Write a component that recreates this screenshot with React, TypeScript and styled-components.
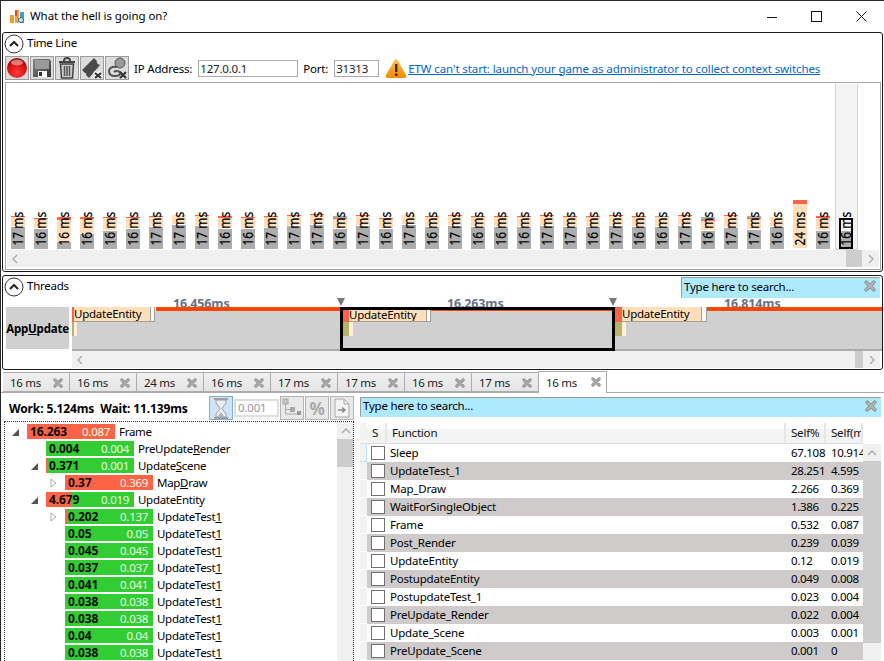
import React from 'react';
import styled, { createGlobalStyle } from 'styled-components';

const Global = createGlobalStyle`
  html, body { margin: 0; padding: 0; background: #fff; }
  * { box-sizing: border-box; }
  body { font-family: "Noto Sans", "Open Sans", sans-serif; font-size: 11.5px; letter-spacing: -0.2px; color: #000; }
`;

const Window = styled.div`
  width: 884px; height: 661px; overflow: hidden; background: #fff;
  border-top: 1px solid #2a2a2a; border-left: 1px solid #2a2a2a;
  display: flex; flex-direction: column;
`;
const TitleBar = styled.div`
  height: 31px; flex: none; display: flex; align-items: center; padding-left: 9px;
`;
const TitleText = styled.span`margin-left: 5px; margin-bottom: 2px; font-size: 11.5px; letter-spacing: -0.08px; flex: 1;`;
const WinBtn = styled.div`width: 45px; height: 31px; display: flex; align-items: center; justify-content: center;`;
const Panel = styled.section<{ $h: number }>`
  height: ${p => p.$h}px; flex: none; width: 881px; margin-left: 1px;
  border: 1px solid #1a1a1a; border-radius: 3px; display: flex; flex-direction: column; position: relative;
`;
const PanelGap = styled.div`height: 3px; flex: none;`;
const PanelHead = styled.div`height: 22px; flex: none; display: flex; align-items: flex-start; gap: 3px; padding: 1px 0 0 1px;`;
const PanelTitle = styled.span`font-size: 11.5px; line-height: 18px; letter-spacing: -0.25px;`;
const Toolbar = styled.div`height: 24px; margin: 1px 0 2px 2px; flex: none; display: flex; align-items: center;`;
const ToolBtn = styled.button`
  width: 24px; height: 24px; margin-right: 1px; padding: 0; flex: none; background: #dcdcdc; border: 1px solid #9c9c9c;
  display: flex; align-items: center; justify-content: center;
`;
const FieldLabel = styled.span<{ $ml: number }>`margin-left: ${p => p.$ml}px; font-size: 11.5px;`;
const Field = styled.div<{ $w: number; $ml: number }>`
  width: ${p => p.$w}px; margin-left: ${p => p.$ml}px; height: 17px; border: 1px solid #ababab; padding-left: 1px;
  font-size: 11.5px; line-height: 15px; color: #222;
`;
const WarnWrap = styled.span`margin-left: 6px; display: flex;`;
const WarnLink = styled.a`margin-left: 1px; color: #0066cc; text-decoration: underline; font-size: 11.5px; letter-spacing: -0.1px; white-space: nowrap;`;
const FrameBox = styled.div`
  height: 188px; margin: 0 1px 0 2px; border: 1px solid #a6a6a6; display: flex; flex-direction: column; flex: none;
`;
const Chart = styled.div`height: 167px; flex: none; display: flex; padding: 1px 0 0 1px;`;
const Cell = styled.div<{ $sel?: boolean }>`
  width: 23px; flex: none; display: flex; align-items: flex-end; padding: 0 5px 1px 4px; position: relative;
  ${p => p.$sel ? 'background:#f3f3f3; box-shadow: inset 1px 0 #d4d4d4, inset -1px 0 #d4d4d4, inset 0 -1px #d4d4d4;' : ''}
`;
const FrameBar = styled.div`width: 14px; position: relative; display: flex; flex-direction: column;`;
const Seg = styled.div<{ $c: string; $grow?: boolean }>`background: ${p => p.$c}; flex: ${p => p.$grow ? '1 1 0' : 'none'};`;
const FrameLabel = styled.span`
  position: absolute; left: -1px; bottom: 4px; width: 16px; display: block; transform-origin: 50% 100%; transform: scaleY(0.85);
`;
const FrameLabelText = styled.span`
  display: block; writing-mode: vertical-rl; transform: rotate(180deg);
  font-size: 14px; line-height: 16px; letter-spacing: 0; white-space: nowrap; color: #000; -webkit-text-stroke: 0.2px #000;
`;
const SelBox = styled.div`position: absolute; left: 0; right: 0; top: 0; bottom: 0; border: 2px solid #000;`;
const HScroll = styled.div<{ $ml?: number; $mr?: number }>`
  height: 17px; flex: none; background: #f0f0f0; display: flex; align-items: center;
  margin: 0 ${p => p.$mr ?? 1}px 0 ${p => p.$ml ?? 1}px;
`;
const ArrowBox = styled.div`width: 17px; height: 17px; flex: none; display: flex; align-items: center; justify-content: center;`;
const Spacer = styled.div`flex: 1;`;
const HThumb = styled.div<{ $w: number }>`width: ${p => p.$w}px; height: 17px; background: #cdcdcd; flex: none;`;
const BlueSearch = styled.div<{ $w: number; $h: number }>`
  width: ${p => p.$w}px; height: ${p => p.$h}px; flex: none; background: #aeeaff; border: 1px solid #aeeaff;
  border-left-color: #9a9a9a; border-top-color: #9a9a9a; display: flex; align-items: center; padding: 0 3px 3px 2px;
  font-size: 11.5px; letter-spacing: -0.23px; justify-content: space-between; position: relative;
`;
const ThreadHead = styled(PanelHead)`padding-right: 2px; justify-content: flex-start;`;
const ThreadRow = styled.div`height: 53px; flex: none; display: flex;`;
const ThreadLabel = styled.div`
  width: 63px; margin: 9px 3px 2px 3px; background: #d0d0d0; font-weight: 700; font-size: 11.5px; letter-spacing: -0.2px;
  display: flex; align-items: center; justify-content: center; white-space: nowrap;
`;
const Track = styled.div`flex: 1; position: relative; overflow: hidden;`;
const TrackBody = styled.div`position: absolute; left: 0; right: 0; top: 13px; height: 40px; background: #d0d0d0; border-bottom: 2px solid #ababab;`;
const Ruler = styled.span<{ $x: number }>`
  position: absolute; left: ${p => p.$x}px; top: -3px; font-size: 12.5px; font-weight: 700; line-height: 18px; color: #667283; height: 12px; overflow: hidden; letter-spacing: -0.15px;
`;
const Orange = styled.div<{ $x: number; $w: number }>`position: absolute; left: ${p => p.$x}px; width: ${p => p.$w}px; top: 9px; height: 4px; background: #ff4500;`;
const Block = styled.div<{ $x: number; $w: number; $y: number; $h: number; $c: string; $line?: boolean }>`
  position: absolute; left: ${p => p.$x}px; width: ${p => p.$w}px; top: ${p => p.$y}px; height: ${p => p.$h}px; background: ${p => p.$c};
  ${p => p.$line ? 'border: 1px solid #a89f94; border-left: 0; border-top: 0;' : ''}
  font-size: 11.5px; letter-spacing: -0.25px; line-height: 14px; padding-left: 0; white-space: nowrap; overflow: hidden;
`;
const Marker = styled.div<{ $x: number }>`
  position: absolute; left: ${p => p.$x}px; top: 0; width: 0; height: 0; border-left: 4px solid transparent; border-right: 4px solid transparent; border-top: 8px solid #777;
`;
const Selection = styled.div`position: absolute; left: 268px; top: 9px; width: 275px; height: 44px; border: 3px solid #000;`;
const TabStrip = styled.div`
  height: 23px; flex: none; display: flex; align-items: flex-end; padding-left: 3px; border-bottom: 1px solid #acacac; margin-left: -1px;
`;
const Tab = styled.div<{ $active?: boolean }>`
  width: ${p => p.$active ? 69 : 67}px; height: ${p => p.$active ? 22 : 20}px; flex: none; display: flex; align-items: center;
  font-size: 11.5px; letter-spacing: -0.3px; padding-left: 7px; position: relative; color: #222;
  margin-bottom: ${p => p.$active ? -1 : 0}px; margin-left: ${p => p.$active ? -1 : 0}px;
  background: ${p => p.$active ? '#fff' : 'linear-gradient(#f0f0f0, #e5e5e5)'};
  border: 1px solid #acacac; border-left-width: ${p => p.$active ? 1 : 0}px; border-bottom: ${p => p.$active ? '0' : '1px solid #acacac'};
`;
const TabX = styled.span<{ $r: number }>`position: absolute; right: ${p => p.$r}px; top: 5px; display: flex;`;
const Content = styled.div`flex: 1; display: flex; min-height: 0;`;
const Left = styled.div`width: 359px; flex: none; display: flex; flex-direction: column;`;
const StatsRow = styled.div`height: 28px; flex: none; display: flex; align-items: center; padding-top: 2px; position: relative;`;
const Stats = styled.div`font-weight: 700; font-size: 12px; margin-left: 8px; width: 200px; white-space: pre; letter-spacing: -0.12px;`;
const StatBtn = styled.div<{ $on?: boolean }>`
  width: 24px; height: 24px; flex: none; margin-right: 1px; display: flex; align-items: center; justify-content: center;
  background: ${p => p.$on ? '#cfe5f5' : '#e9e9e9'}; border: 1px solid ${p => p.$on ? '#7dafd0' : '#b4b4b4'}; color: #a8a8a8; font-size: 17px; font-weight: 700;
`;
const StatInput = styled.div`
  width: 45px; height: 18px; margin-right: 1px; flex: none; border: 2px solid #dedede; color: #999; font-size: 11.5px; line-height: 14px; padding-left: 2px;
`;
const TreeBox = styled.div`
  flex: 1; width: 350px; margin-left: 3px; border: 1px dotted #333; border-bottom: 0; display: flex; min-height: 0;
`;
const TreeRows = styled.div`flex: 1; padding-top: 2px; overflow: hidden;`;
const TreeRow = styled.div<{ $lvl: number }>`
  height: 17px; display: flex; align-items: flex-start; padding-left: ${p => 5 + p.$lvl * 19}px;
`;
const Twist = styled.div`width: 17px; height: 15px; flex: none; display: flex; align-items: center; justify-content: flex-start; padding-left: 1px;`;
const Bar = styled.div<{ $red: number }>`
  width: 88px; height: 15px; flex: none; display: flex; align-items: center; justify-content: space-between; padding: 0 5px 0 3px;
  background: linear-gradient(to right, #ff6347 ${p => p.$red}px, #32cd32 ${p => p.$red}px);
`;
const Total = styled.span`font-weight: 700; font-size: 12px; letter-spacing: -0.1px; color: #0a0a0a;`;
const SelfV = styled.span`font-size: 11.5px; letter-spacing: -0.3px; color: #e8ffe8;`;
const RowName = styled.span`margin-left: 4px; font-size: 11.5px; letter-spacing: -0.3px; line-height: 15px; white-space: nowrap;`;
const U = styled.span`text-decoration: underline;`;
const VScroll = styled.div`width: 16px; flex: none; background: #f0f0f0; display: flex; flex-direction: column;`;
const VThumb = styled.div<{ $h: number }>`height: ${p => p.$h}px; background: #cdcdcd; flex: none;`;
const Right = styled.div`width: 521px; flex: none; display: flex; flex-direction: column; padding-top: 4px;`;
const Table = styled.div`margin-top: 6px; flex: 1; display: flex; flex-direction: column; min-height: 0;`;
const HeadRow = styled.div`
  height: 21px; flex: none; width: 503px; display: flex; align-items: center; font-size: 11.5px; color: #111; padding-bottom: 1px;
  background: linear-gradient(#fff 30%, #f3f3f3 30%); border-bottom: 1px solid #ddd;
`;
const HeadCell = styled.div<{ $w: number }>`
  width: ${p => p.$w}px; height: 100%; flex: none; display: flex; align-items: center; padding-left: 5px; overflow: hidden; white-space: nowrap;
  border-right: 2px solid #e6e6e6;
`;
const Stub = styled.div<{ $on?: boolean }>`
  width: 7px; height: 100%; flex: none; background: #f2f2f2; border-bottom: 1px solid ${p => p.$on ? '#bfe0f5' : '#fff'};
  ${p => p.$on ? 'border-right: 1px solid #bfe0f5;' : ''}
`;
const BodyWrap = styled.div`flex: 1; display: flex; min-height: 0;`;
const Rows = styled.div`width: 503px; flex: none; display: flex; flex-direction: column;`;
const DataRow = styled.div`height: 18px; flex: none; display: flex; align-items: center; font-size: 11.5px;`;
const RowBody = styled.div<{ $g: boolean }>`flex: 1; height: 100%; display: flex; align-items: center; padding-bottom: 1px; background: ${p => p.$g ? '#cfcbcb' : '#fff'};`;
const Check = styled.div`width: 14px; height: 14px; flex: none; margin: 1px 5px 0 4px; background: #fff; border: 1px solid #707070;`;
const Fn = styled.div`width: 401px; flex: none;`;
const Num = styled.div`width: 40px; flex: none; letter-spacing: -0.3px;`;
const ScrollCol = styled(VScroll)`width: 18px; margin-top: 0;`;

const Chev = ({ dir, c = '#a8a8a8' }: { dir: 'l' | 'r' | 'u' | 'd'; c?: string }) => {
  const d = { l: 'M6 1 L2 5 L6 9', r: 'M3 1 L7 5 L3 9', u: 'M1 7 L5 3 L9 7', d: 'M1 3 L5 7 L9 3' }[dir];
  return <svg width="10" height="10"><path d={d} fill="none" stroke={c} strokeWidth="1.3" /></svg>;
};
const Collapse = () => (
  <svg width="20" height="20" viewBox="0 0 20 20">
    <circle cx="10" cy="10" r="9" fill="#fff" stroke="#333" strokeWidth="1" />
    <path d="M6 12 L10 8 L14 12" fill="none" stroke="#222" strokeWidth="2" />
  </svg>
);
const CrossIcon = ({ s = 12, c = '#b4b4b4' }: { s?: number; c?: string }) => (
  <svg width={s} height={s} viewBox="0 0 12 12">
    <path d="M2.2 2.2 L9.8 9.8 M9.8 2.2 L2.2 9.8" stroke="#8a8a8a" strokeWidth="3.6" strokeLinecap="round" />
    <path d="M2.2 2.2 L9.8 9.8 M9.8 2.2 L2.2 9.8" stroke={c} strokeWidth="2" strokeLinecap="round" />
  </svg>
);
const Logo = () => (
  <svg width="15" height="15" viewBox="0 0 15 15">
    <rect x="0" y="6" width="4" height="8" fill="#f39c25" />
    <rect x="5" y="1" width="4" height="13" fill="#e8a33a" />
    <rect x="5" y="1" width="2" height="6" fill="#d8473c" />
    <rect x="10" y="3" width="4" height="11" fill="#3d9bd8" />
    <circle cx="11" cy="11" r="2.5" fill="#bfe3f5" stroke="#2d6f9e" />
  </svg>
);
const RecordIcon = () => (
  <svg width="22" height="22" viewBox="0 0 22 22">
    <defs><radialGradient id="rg" cx="50%" cy="75%" r="70%"><stop offset="0" stopColor="#ff3b3b" /><stop offset="0.7" stopColor="#d80f0f" /><stop offset="1" stopColor="#8e0606" /></radialGradient></defs>
    <circle cx="11" cy="11" r="10" fill="url(#rg)" />
    <ellipse cx="11" cy="5.5" rx="6" ry="3" fill="#fff" opacity="0.45" />
  </svg>
);
const SaveIcon = () => (
  <svg width="20" height="20" viewBox="0 0 20 20">
    <defs><linearGradient id="sg" x1="0" y1="0" x2="1" y2="1"><stop offset="0" stopColor="#8a8a8a" /><stop offset="1" stopColor="#333" /></linearGradient></defs>
    <path d="M1 1 H17 L19 3 V19 H1 Z" fill="url(#sg)" />
    <rect x="3" y="2" width="14" height="9" fill="#9a9a9a" />
    <rect x="6" y="13" width="9" height="6" fill="#fff" />
    <rect x="7" y="14" width="3" height="4" fill="#333" />
  </svg>
);
const TrashIcon = () => (
  <svg width="20" height="22" viewBox="0 0 20 22">
    <path d="M2 5 H18 M7 4 Q7 1 10 1 Q13 1 13 4" fill="none" stroke="#444" strokeWidth="2" />
    <path d="M3.5 7 H16.5 L15.5 21 H4.5 Z" fill="#ccc" stroke="#444" strokeWidth="1.5" />
    <path d="M7.5 9 V19 M10 9 V19 M12.5 9 V19" stroke="#555" strokeWidth="1.5" />
  </svg>
);
const TicketIcon = () => (
  <svg width="22" height="22" viewBox="0 0 22 22">
    <path d="M1 13 L13 1 L16 4 Q15 6 17 7 L19 8 L8 21 L5 18 Q6 16 4 16 Z" fill="#4a4a4a" />
    <path d="M13 15 L20 21 M20 15 L13 21" stroke="#fff" strokeWidth="4" />
    <path d="M14 16 L20 21 M20 16 L14 21" stroke="#333" strokeWidth="2.2" />
  </svg>
);
const HookIcon = () => (
  <svg width="22" height="22" viewBox="0 0 22 22">
    <circle cx="14" cy="6" r="5" fill="#9a9a9a" stroke="#555" />
    <path d="M11 10 Q4 9 3 14 Q3 19 9 19 Q15 19 14 15 Q10 13 8 15" fill="none" stroke="#555" strokeWidth="2" />
    <path d="M14 15 L20 21 M20 15 L14 21" stroke="#333" strokeWidth="2.2" />
  </svg>
);
const WarnIcon = () => (
  <svg width="22" height="21" viewBox="0 0 22 21">
    <defs><linearGradient id="wg" x1="0" y1="0" x2="0" y2="1"><stop offset="0" stopColor="#ffc04d" /><stop offset="1" stopColor="#f08a00" /></linearGradient></defs>
    <path d="M11 1 Q12 1 13 3 L21 17 Q22 20 19 20 H3 Q0 20 1 17 L9 3 Q10 1 11 1 Z" fill="url(#wg)" />
    <rect x="10" y="6" width="2.4" height="8" fill="#3a2a10" />
    <rect x="10" y="15.5" width="2.4" height="2.5" fill="#3a2a10" />
  </svg>
);
const Hourglass = () => (
  <svg width="16" height="21" viewBox="0 0 16 21">
    <path d="M1 1 H15 M1 20 H15" stroke="#9aa0a4" strokeWidth="2" />
    <path d="M3 2 V5 L7 10.5 L3 16 V19 H13 V16 L9 10.5 L13 5 V2 Z" fill="#e8eef2" stroke="#9aa0a4" />
    <path d="M4.5 19 L8 14 L11.5 19 Z" fill="#b0b4b8" />
  </svg>
);
const TreeIcon = () => (
  <svg width="20" height="20" viewBox="0 0 20 20">
    <rect x="1" y="1" width="5" height="5" fill="#c4c4c4" stroke="#aaa" />
    <rect x="8" y="9" width="5" height="5" fill="#aaa" />
    <rect x="15" y="13" width="4" height="4" fill="#999" />
    <path d="M3.5 6 V11.5 H8 M3.5 11 V16 H15" stroke="#aaa" fill="none" />
  </svg>
);
const FileIcon = () => (
  <svg width="16" height="20" viewBox="0 0 16 20">
    <path d="M1 1 H10 L15 6 V19 H1 Z" fill="#f4f4f4" stroke="#a8a8a8" />
    <path d="M10 1 V6 H15" fill="none" stroke="#a8a8a8" />
    <path d="M4 12 H10 M8 9.5 L11 12 L8 14.5" fill="none" stroke="#888" strokeWidth="1.5" />
  </svg>
);
const Twisty = ({ open }: { open?: boolean }) => (
  <svg width="9" height="10" viewBox="0 0 9 10">
    {open ? <path d="M8 2 V9 H1 Z" fill="#555" /> : <path d="M2 1 L7 5 L2 9 Z" fill="#fff" stroke="#aaa" />}
  </svg>
);

type F = [string, number, number, number, number];
const frames: F[] = [
  ['17', 216, 0, 1, 227], ['16', 218, 0, 1, 229], ['16', 217, 0, 3, 242], ['16', 217, 0, 2, 234], ['16', 217, 0, 1, 231],
  ['16', 217, 0, 1, 229], ['17', 216, 0, 1, 227], ['17', 215, 0, 0, 225], ['17', 215, 0, 1, 226], ['16', 216, 0, 2, 229],
  ['16', 217, 0, 1, 229], ['17', 216, 0, 1, 228], ['17', 215, 0, 1, 226], ['17', 214, 0, 1, 225], ['16', 216, 2, 1, 229],
  ['17', 215, 0, 1, 226], ['16', 218, 0, 1, 229], ['17', 215, 0, 0, 225], ['16', 216, 0, 1, 227], ['17', 215, 0, 1, 226],
  ['16', 216, 0, 1, 227], ['16', 216, 0, 1, 227], ['16', 216, 0, 1, 227], ['17', 215, 0, 1, 226], ['17', 216, 0, 1, 227],
  ['16', 216, 0, 1, 227], ['17', 215, 0, 1, 226], ['16', 216, 0, 1, 227], ['16', 216, 1, 0, 227], ['17', 215, 0, 1, 226],
  ['16', 217, 3, 1, 231], ['17', 215, 0, 1, 228], ['17', 216, 2, 1, 230], ['16', 217, 0, 0, 227], ['24', 200, 0, 4, 249],
  ['16', 216, 0, 2, 231],
];

const tabs = ['16 ms', '16 ms', '24 ms', '16 ms', '17 ms', '17 ms', '16 ms', '17 ms'];

type T = { lvl: number; tw?: 'o' | 'c'; total: string; self: string; red: number; name: React.ReactNode };
const T1 = <>UpdateTest<U>1</U></>;
const tree: T[] = [
  { lvl: 0, tw: 'o', total: '16.263', self: '0.087', red: 88, name: 'Frame' },
  { lvl: 1, total: '0.004', self: '0.004', red: 0, name: <>PreUpdate<U>R</U>ender</> },
  { lvl: 1, tw: 'o', total: '0.371', self: '0.001', red: 2, name: <>Update<U>S</U>cene</> },
  { lvl: 2, tw: 'c', total: '0.37', self: '0.369', red: 88, name: <>Map<U>D</U>raw</> },
  { lvl: 1, tw: 'o', total: '4.679', self: '0.019', red: 25, name: 'UpdateEntity' },
  { lvl: 2, tw: 'c', total: '0.202', self: '0.137', red: 3, name: T1 },
  ...['0.05', '0.045', '0.037', '0.041', '0.038', '0.038', '0.04', '0.038'].map(v => ({ lvl: 2, total: v, self: v, red: 1, name: T1 })),
];

const fnRows: [string, string, string][] = [
  ['Sleep', '67.108', '10.914'], ['UpdateTest_1', '28.251', '4.595'], ['Map_Draw', '2.266', '0.369'],
  ['WaitForSingleObject', '1.386', '0.225'], ['Frame', '0.532', '0.087'], ['Post_Render', '0.239', '0.039'],
  ['UpdateEntity', '0.12', '0.019'], ['PostupdateEntity', '0.049', '0.008'], ['PostupdateTest_1', '0.023', '0.004'],
  ['PreUpdate_Render', '0.022', '0.004'], ['Update_Scene', '0.003', '0.001'], ['PreUpdate_Scene', '0.001', '0'],
];

const FrameColumn = ({ f }: { f: F }) => {
  const [label, top, cap, red, gray] = f;
  const h = 249 - top;
  return (
    <Cell>
      <FrameBar style={{ height: h }}>
        {cap > 0 && <Seg $c="#adadad" style={{ height: cap }} />}
        {red > 0 && <Seg $c="#ff6347" style={{ height: red }} />}
        <Seg $c="#ffdfba" $grow />
        <Seg $c="#fff" style={{ height: 1 }} />
        <Seg $c="#adadad" style={{ height: 249 - gray }} />
        <FrameLabel><FrameLabelText>{label} ms</FrameLabelText></FrameLabel>
      </FrameBar>
    </Cell>
  );
};

export default function App() {
  return (
    <Window>
      <Global />
      <TitleBar>
        <Logo />
        <TitleText>What the hell is going on?</TitleText>
        <WinBtn><svg width="10" height="10"><path d="M0 5.5 H10" stroke="#111" /></svg></WinBtn>
        <WinBtn><svg width="11" height="11"><rect x="0.5" y="0.5" width="10" height="10" fill="none" stroke="#111" /></svg></WinBtn>
        <WinBtn><svg width="11" height="11"><path d="M0.5 0.5 L10.5 10.5 M10.5 0.5 L0.5 10.5" stroke="#111" /></svg></WinBtn>
      </TitleBar>

      <Panel $h={240}>
        <PanelHead><Collapse /><PanelTitle>Time Line</PanelTitle></PanelHead>
        <Toolbar>
          <ToolBtn><RecordIcon /></ToolBtn>
          <ToolBtn><SaveIcon /></ToolBtn>
          <ToolBtn><TrashIcon /></ToolBtn>
          <ToolBtn><TicketIcon /></ToolBtn>
          <ToolBtn><HookIcon /></ToolBtn>
          <FieldLabel $ml={4}>IP Address:</FieldLabel>
          <Field $w={100} $ml={6}>127.0.0.1</Field>
          <FieldLabel $ml={5}>Port:</FieldLabel>
          <Field $w={45} $ml={6}>31313</Field>
          <WarnWrap><WarnIcon /></WarnWrap>
          <WarnLink>ETW can't start: launch your game as administrator to collect context switches</WarnLink>
        </Toolbar>
        <FrameBox>
          <Chart>
            {frames.map((f, i) => <FrameColumn key={i} f={f} />)}
            <Cell $sel>
              <FrameBar style={{ height: 31 }}>
                <Seg $c="#f3f3f3" $grow />
                <Seg $c="#adadad" style={{ height: 18 }} />
                <SelBox />
                <FrameLabel><FrameLabelText>16 ms</FrameLabelText></FrameLabel>
              </FrameBar>
            </Cell>
          </Chart>
          <HScroll>
            <ArrowBox><Chev dir="l" /></ArrowBox>
            <Spacer />
            <HThumb $w={16} />
            <ArrowBox><Chev dir="r" /></ArrowBox>
          </HScroll>
        </FrameBox>
      </Panel>
      <PanelGap />
      <Panel $h={95}>
        <ThreadHead>
          <Collapse /><PanelTitle>Threads</PanelTitle>
          <Spacer />
          <BlueSearch $w={199} $h={21}>Type here to search...<CrossIcon /></BlueSearch>
        </ThreadHead>
        <ThreadRow>
          <ThreadLabel><span>App<U>U</U>pdate</span></ThreadLabel>
          <Track>
            <Ruler $x={101}>16.456ms</Ruler>
            <Ruler $x={375}>16.263ms</Ruler>
            <Ruler $x={652}>16.814ms</Ruler>
            <TrackBody />
            <Orange $x={84} $w={184} />
            <Orange $x={359} $w={184} />
            <Orange $x={635} $w={180} />
            <Block $x={0} $w={2} $y={9} $h={15} $c="#ff6347" />
            <Block $x={2} $w={77} $y={9} $h={15} $c="#ffdfba" $line>UpdateEntity</Block>
            <Block $x={79} $w={4} $y={9} $h={15} $c="#f2fbff" $line />
            <Block $x={0} $w={2} $y={24} $h={14} $c="#b5b56a" />
            <Block $x={2} $w={3} $y={24} $h={14} $c="#ffeeda" />
            <Block $x={271} $w={6} $y={10} $h={14} $c="#ff6347" />
            <Block $x={277} $w={78} $y={10} $h={14} $c="#ffdfba" $line>UpdateEntity</Block>
            <Block $x={355} $w={4} $y={10} $h={14} $c="#f2fbff" $line />
            <Block $x={271} $w={6} $y={24} $h={14} $c="#b5b56a" />
            <Block $x={277} $w={4} $y={24} $h={14} $c="#ffeeda" />
            <Block $x={543} $w={7} $y={9} $h={15} $c="#ff6347" />
            <Block $x={550} $w={80} $y={9} $h={15} $c="#ffdfba" $line>UpdateEntity</Block>
            <Block $x={630} $w={5} $y={9} $h={15} $c="#f2fbff" $line />
            <Block $x={543} $w={7} $y={24} $h={14} $c="#b5b56a" />
            <Block $x={550} $w={4} $y={24} $h={14} $c="#ffeeda" />
            <Marker $x={265} />
            <Marker $x={537} />
            <Selection />
          </Track>
        </ThreadRow>
        <HScroll $ml={69} $mr={2}>
          <ArrowBox><Chev dir="l" /></ArrowBox>
          <Spacer />
          <HThumb $w={8} />
          <ArrowBox><Chev dir="r" /></ArrowBox>
        </HScroll>
      </Panel>

      <TabStrip>
        {tabs.map((t, i) => (
          <Tab key={i}>{t}<TabX $r={6}><CrossIcon s={10} c="#aaa" /></TabX></Tab>
        ))}
        <Tab $active>16 ms<TabX $r={5}><CrossIcon s={10} c="#aaa" /></TabX></Tab>
      </TabStrip>

      <Content>
        <Left>
          <StatsRow>
            <Stats>{'Work: 5.124ms  Wait: 11.139ms'}</Stats>
            <StatBtn $on><Hourglass /></StatBtn>
            <StatInput>0.001</StatInput>
            <StatBtn><TreeIcon /></StatBtn>
            <StatBtn>%</StatBtn>
            <StatBtn><FileIcon /></StatBtn>
          </StatsRow>
          <TreeBox>
            <TreeRows>
              {tree.map((r, i) => (
                <TreeRow key={i} $lvl={r.lvl}>
                  <Twist>{r.tw && <Twisty open={r.tw === 'o'} />}</Twist>
                  <Bar $red={r.red}>
                    <Total>{r.total}</Total>
                    <SelfV>{r.self}</SelfV>
                  </Bar>
                  <RowName>{r.name}</RowName>
                </TreeRow>
              ))}
            </TreeRows>
            <VScroll>
              <ArrowBox><Chev dir="u" /></ArrowBox>
              <VThumb $h={28} />
            </VScroll>
          </TreeBox>
        </Left>
        <Right>
          <BlueSearch $w={521} $h={20}>Type here to search...<CrossIcon /></BlueSearch>
          <Table>
            <HeadRow>
              <Stub />
              <HeadCell $w={20}>S</HeadCell>
              <HeadCell $w={399}>Function</HeadCell>
              <HeadCell $w={40}>Self%</HeadCell>
              <HeadCell $w={37}>Self(ms)</HeadCell>
            </HeadRow>
            <BodyWrap>
              <Rows>
                {fnRows.map((r, i) => (
                  <DataRow key={r[0]}>
                    <Stub $on={i === 0} />
                    <RowBody $g={i % 2 === 1}>
                      <Check />
                      <Fn>{r[0]}</Fn>
                      <Num>{r[1]}</Num>
                      <Num>{r[2]}</Num>
                    </RowBody>
                  </DataRow>
                ))}
              </Rows>
              <ScrollCol>
                <ArrowBox><Chev dir="u" /></ArrowBox>
                <VThumb $h={182} />
              </ScrollCol>
            </BodyWrap>
          </Table>
        </Right>
      </Content>
    </Window>
  );
}
